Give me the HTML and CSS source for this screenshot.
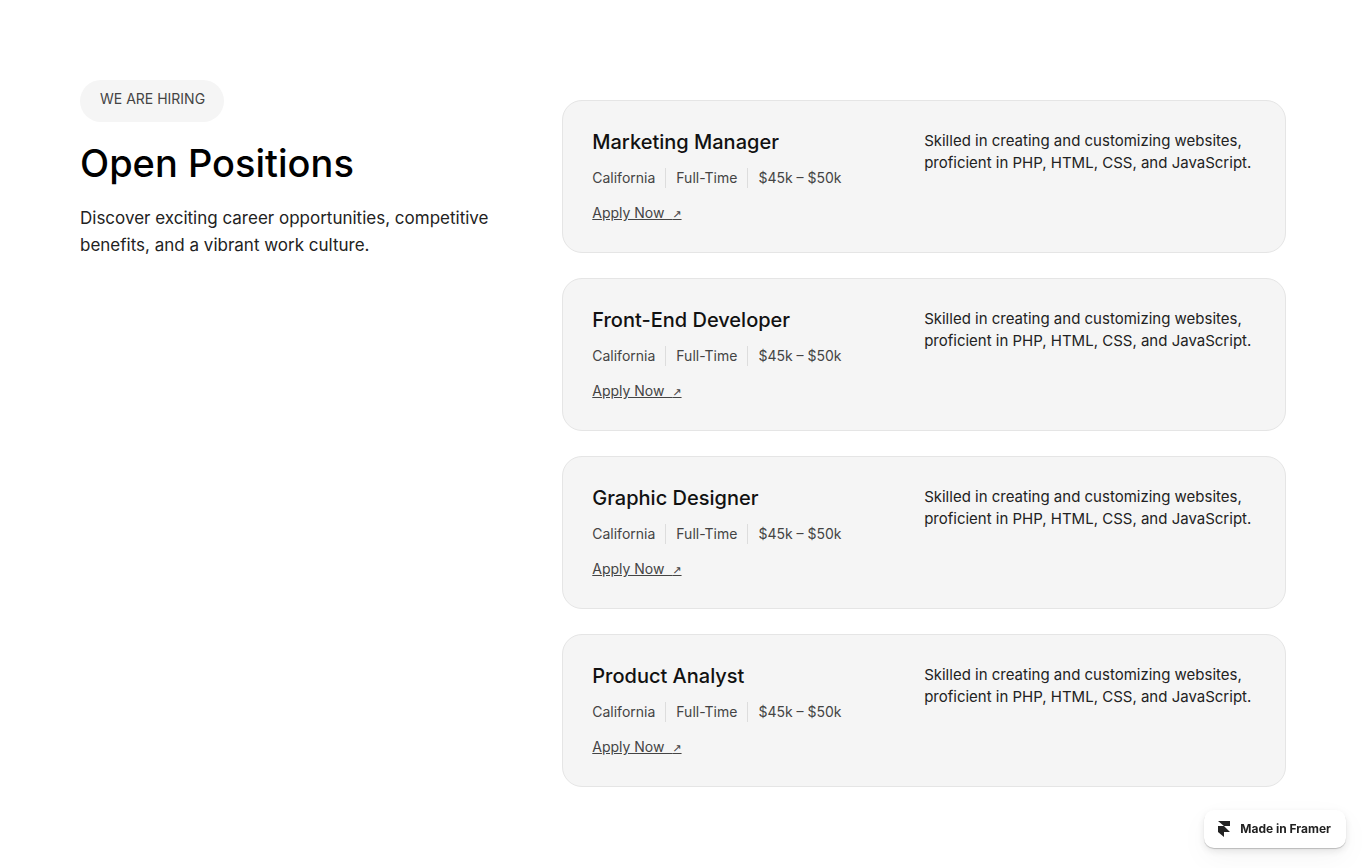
FILE: index.html
```html
<!DOCTYPE html>
<html lang="en">
<head>
    <meta charset="UTF-8">
    <meta name="viewport" content="width=device-width, initial-scale=1.0">
    <title>Open Positions</title>
    <link rel="stylesheet" href="styles.css">
</head>
<body>
    <main class="careers">
        <section class="intro">
            <p class="tag">WE ARE HIRING</p>
            <h1>Open Positions</h1>
            <p class="lead">Discover exciting career opportunities, competitive benefits, and a vibrant work culture.</p>
        </section>
        <section class="jobs">
            <article class="job">
                <div class="job-info">
                    <h2>Marketing Manager</h2>
                    <ul class="meta">
                        <li>California</li>
                        <li>Full-Time</li>
                        <li>$45k – $50k</li>
                    </ul>
                    <a href="#" class="apply">Apply Now&nbsp; <span class="arrow">↗</span></a>
                </div>
                <p class="job-text">Skilled in creating and customizing websites, proficient in PHP, HTML, CSS, and JavaScript.</p>
            </article>
            <article class="job">
                <div class="job-info">
                    <h2>Front-End Developer</h2>
                    <ul class="meta">
                        <li>California</li>
                        <li>Full-Time</li>
                        <li>$45k – $50k</li>
                    </ul>
                    <a href="#" class="apply">Apply Now&nbsp; <span class="arrow">↗</span></a>
                </div>
                <p class="job-text">Skilled in creating and customizing websites, proficient in PHP, HTML, CSS, and JavaScript.</p>
            </article>
            <article class="job">
                <div class="job-info">
                    <h2>Graphic Designer</h2>
                    <ul class="meta">
                        <li>California</li>
                        <li>Full-Time</li>
                        <li>$45k – $50k</li>
                    </ul>
                    <a href="#" class="apply">Apply Now&nbsp; <span class="arrow">↗</span></a>
                </div>
                <p class="job-text">Skilled in creating and customizing websites, proficient in PHP, HTML, CSS, and JavaScript.</p>
            </article>
            <article class="job">
                <div class="job-info">
                    <h2>Product Analyst</h2>
                    <ul class="meta">
                        <li>California</li>
                        <li>Full-Time</li>
                        <li>$45k – $50k</li>
                    </ul>
                    <a href="#" class="apply">Apply Now&nbsp; <span class="arrow">↗</span></a>
                </div>
                <p class="job-text">Skilled in creating and customizing websites, proficient in PHP, HTML, CSS, and JavaScript.</p>
            </article>
        </section>
    </main>
    <a href="#" class="framer-badge">
        <svg width="12" height="16" viewBox="0 0 12 16" aria-hidden="true">
            <path d="M0 0h12v5H6zM0 5h6l6 6H6v5l-6-5z" fill="#222"/>
        </svg>
        Made in Framer
    </a>
</body>
</html>
```

FILE: styles.css
```css
* {
    box-sizing: border-box;
}
body {
    margin: 0;
    font-family: Inter, "Liberation Sans", sans-serif;
    background-color: #fff;
    color: #222;
}
h1, h2, p, ul {
    margin: 0;
    padding: 0;
}
.careers {
    display: grid;
    grid-template-columns: 3fr 5fr;
    gap: 48px;
    padding: 80px;
}
.intro {
    display: flex;
    flex-direction: column;
    align-items: flex-start;
}
.tag {
    padding: 8px 19px 13px 20px;
    border-radius: 21px;
    background-color: #f5f5f5;
    color: #444;
    font-size: 14px;
    line-height: 21px;
}
h1 {
    margin-top: 17px;
    color: #000;
    font-size: 38px;
    font-weight: 500;
    line-height: 48px;
}
.lead {
    margin-top: 18px;
    font-size: 17px;
    line-height: 27px;
}
.jobs {
    display: flex;
    flex-direction: column;
    gap: 25px;
    padding-top: 20px;
}
.job {
    display: grid;
    grid-template-columns: 1fr 1fr;
    padding: 29px;
    border: 1px solid #e5e5e5;
    border-radius: 20px;
    background-color: #f5f5f5;
}
.job-info {
    display: flex;
    flex-direction: column;
    align-items: flex-start;
}
.job h2 {
    color: #111;
    font-size: 20px;
    font-weight: 500;
    line-height: 24px;
}
.meta {
    display: flex;
    margin-top: 14px;
    color: #444;
    font-size: 14px;
    line-height: 20px;
    list-style: none;
}
.meta li + li {
    margin-left: 10px;
    padding-left: 10px;
    border-left: 1px solid #ddd;
}
.apply {
    margin-top: 14px;
    color: #444;
    font-size: 14px;
    line-height: 21px;
}
.arrow {
    font-family: "DejaVu Sans", sans-serif;
    font-size: 11px;
    line-height: 1;
}
.job-text {
    font-size: 15px;
    line-height: 22px;
}
.framer-badge {
    position: fixed;
    right: 20px;
    bottom: 20px;
    display: flex;
    align-items: center;
    gap: 10px;
    padding: 10px 15px 10px 14px;
    border-radius: 10px;
    background-color: #fff;
    box-shadow: 0 1px 1px rgba(0, 0, 0, 0.2), 0 3px 8px rgba(0, 0, 0, 0.1), 0 10px 30px rgba(0, 0, 0, 0.04);
    color: #222;
    font-size: 12px;
    font-weight: 700;
    line-height: 18px;
    text-decoration: none;
}
```
